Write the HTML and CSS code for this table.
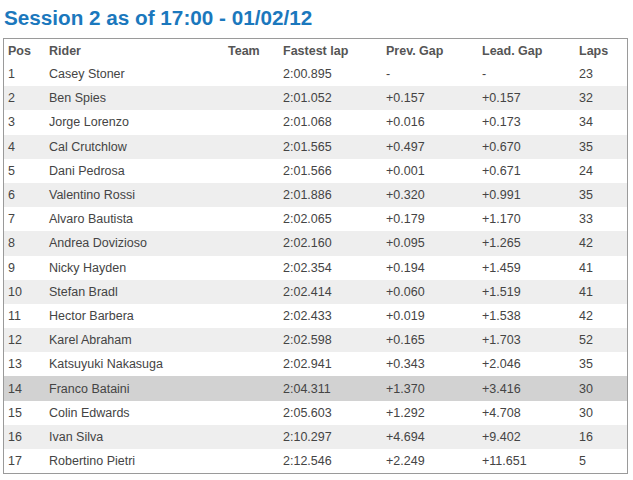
FILE: index.html
```html
<!DOCTYPE html>
<html>
<head>
<meta charset="utf-8">
<link rel="stylesheet" href="styles.css">
</head>
<body>
<h1 class="title">Session 2 as of 17:00 - 01/02/12</h1>
<table class="results">
<colgroup>
<col class="c-pos"><col class="c-rider"><col class="c-team"><col class="c-lap"><col class="c-prev"><col class="c-lead"><col class="c-laps">
</colgroup>
<thead>
<tr><th>Pos</th><th>Rider</th><th>Team</th><th>Fastest lap</th><th>Prev. Gap</th><th>Lead. Gap</th><th>Laps</th></tr>
</thead>
<tbody>
<tr><td>1</td><td>Casey Stoner</td><td></td><td>2:00.895</td><td>-</td><td>-</td><td>23</td></tr>
<tr><td>2</td><td>Ben Spies</td><td></td><td>2:01.052</td><td>+0.157</td><td>+0.157</td><td>32</td></tr>
<tr><td>3</td><td>Jorge Lorenzo</td><td></td><td>2:01.068</td><td>+0.016</td><td>+0.173</td><td>34</td></tr>
<tr><td>4</td><td>Cal Crutchlow</td><td></td><td>2:01.565</td><td>+0.497</td><td>+0.670</td><td>35</td></tr>
<tr><td>5</td><td>Dani Pedrosa</td><td></td><td>2:01.566</td><td>+0.001</td><td>+0.671</td><td>24</td></tr>
<tr><td>6</td><td>Valentino Rossi</td><td></td><td>2:01.886</td><td>+0.320</td><td>+0.991</td><td>35</td></tr>
<tr><td>7</td><td>Alvaro Bautista</td><td></td><td>2:02.065</td><td>+0.179</td><td>+1.170</td><td>33</td></tr>
<tr><td>8</td><td>Andrea Dovizioso</td><td></td><td>2:02.160</td><td>+0.095</td><td>+1.265</td><td>42</td></tr>
<tr><td>9</td><td>Nicky Hayden</td><td></td><td>2:02.354</td><td>+0.194</td><td>+1.459</td><td>41</td></tr>
<tr><td>10</td><td>Stefan Bradl</td><td></td><td>2:02.414</td><td>+0.060</td><td>+1.519</td><td>41</td></tr>
<tr><td>11</td><td>Hector Barbera</td><td></td><td>2:02.433</td><td>+0.019</td><td>+1.538</td><td>42</td></tr>
<tr><td>12</td><td>Karel Abraham</td><td></td><td>2:02.598</td><td>+0.165</td><td>+1.703</td><td>52</td></tr>
<tr><td>13</td><td>Katsuyuki Nakasuga</td><td></td><td>2:02.941</td><td>+0.343</td><td>+2.046</td><td>35</td></tr>
<tr class="hl"><td>14</td><td>Franco Bataini</td><td></td><td>2:04.311</td><td>+1.370</td><td>+3.416</td><td>30</td></tr>
<tr><td>15</td><td>Colin Edwards</td><td></td><td>2:05.603</td><td>+1.292</td><td>+4.708</td><td>30</td></tr>
<tr><td>16</td><td>Ivan Silva</td><td></td><td>2:10.297</td><td>+4.694</td><td>+9.402</td><td>16</td></tr>
<tr><td>17</td><td>Robertino Pietri</td><td></td><td>2:12.546</td><td>+2.249</td><td>+11.651</td><td>5</td></tr>
</tbody>
</table>
</body>
</html>
```
FILE: styles.css
```css
html, body {
  margin: 0;
  padding: 0;
  background: #ffffff;
}

body {
  font-family: "Liberation Sans", Arial, Helvetica, sans-serif;
}

.title {
  margin: 6px 0 0 4px;
  height: 24px;
  line-height: 24px;
  font-size: 20.7px;
  font-weight: bold;
  color: #1b78bd;
}

.results {
  margin: 8px 0 0 3px;
  width: 625px;
  table-layout: fixed;
  border-collapse: separate;
  border-spacing: 0;
  border: 1px solid #9a9a9a;
  font-size: 12.5px;
  color: #444444;
}

.c-pos { width: 41px; }
.c-rider { width: 179px; }
.c-team { width: 55px; }
.c-lap { width: 103px; }
.c-prev { width: 96px; }
.c-lead { width: 97px; }
.c-laps { width: 52px; }

.results th,
.results td {
  padding: 0 0 0 4px;
  text-align: left;
  white-space: nowrap;
  overflow: hidden;
}

.results th {
  height: 23px;
  font-weight: bold;
  color: #555555;
}

.results td {
  height: 24.2px;
}

.results tbody tr:nth-child(even) {
  background: #eeeeee;
}

.results tbody tr.hl {
  background: #d2d2d2;
}
```
